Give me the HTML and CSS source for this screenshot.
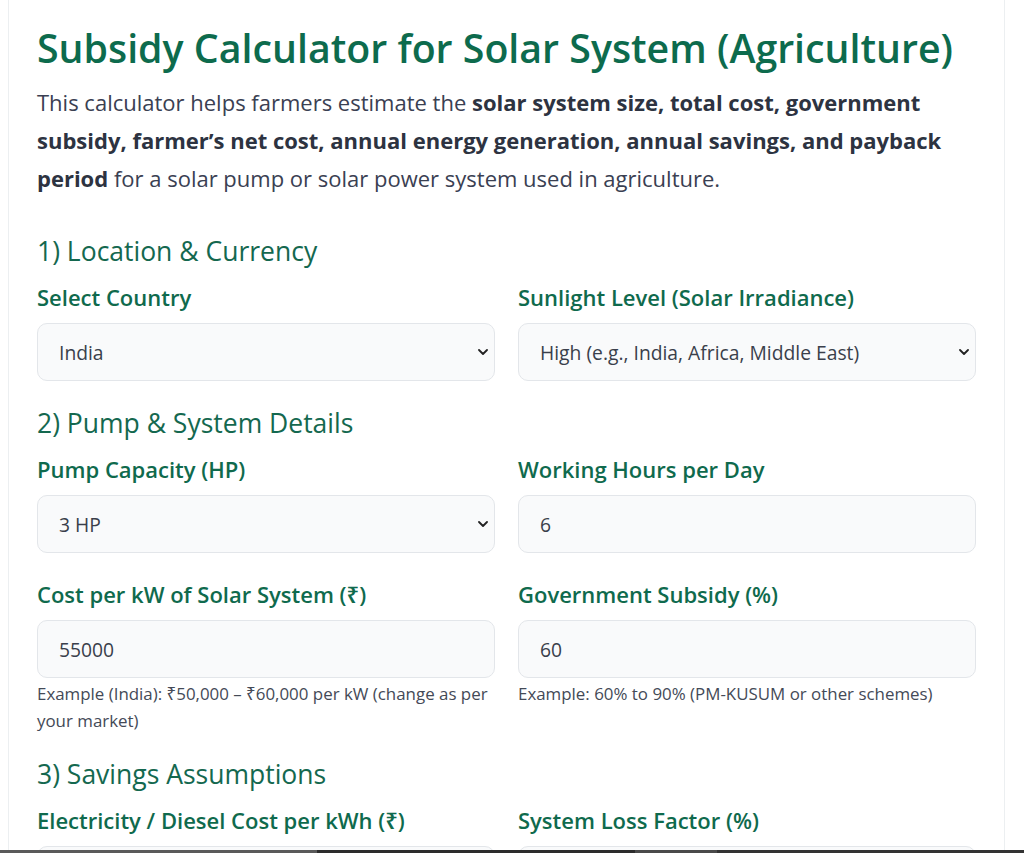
FILE: index.html
```html
<!DOCTYPE html>
<html lang="en">
<head>
<meta charset="utf-8">
<title>Subsidy Calculator for Solar System (Agriculture)</title>
<link rel="stylesheet" href="styles.css">
</head>
<body>
<main class="card">
  <h1 class="title">Subsidy Calculator for Solar System (Agriculture)</h1>
  <p class="intro">This calculator helps farmers estimate the <strong>solar system size, total cost, government subsidy, farmer’s net cost, annual energy generation, annual savings, and payback period</strong> for a solar pump or solar power system used in agriculture.</p>

  <h2 class="section">1) Location &amp; Currency</h2>
  <div class="grid">
    <div class="field">
      <label class="label" for="country">Select Country</label>
      <div class="select-wrap">
        <select id="country" class="control"><option>India</option></select>
        <svg class="chev" width="10" height="6" viewBox="0 0 10 6"><path d="M1 1 L5 5 L9 1" fill="none" stroke="#222" stroke-width="1.8" stroke-linecap="round" stroke-linejoin="round"/></svg>
      </div>
    </div>
    <div class="field">
      <label class="label" for="sun">Sunlight Level (Solar Irradiance)</label>
      <div class="select-wrap">
        <select id="sun" class="control"><option>High (e.g., India, Africa, Middle East)</option></select>
        <svg class="chev" width="10" height="6" viewBox="0 0 10 6"><path d="M1 1 L5 5 L9 1" fill="none" stroke="#222" stroke-width="1.8" stroke-linecap="round" stroke-linejoin="round"/></svg>
      </div>
    </div>
  </div>

  <h2 class="section">2) Pump &amp; System Details</h2>
  <div class="grid">
    <div class="field">
      <label class="label" for="hp">Pump Capacity (HP)</label>
      <div class="select-wrap">
        <select id="hp" class="control"><option>3 HP</option></select>
        <svg class="chev" width="10" height="6" viewBox="0 0 10 6"><path d="M1 1 L5 5 L9 1" fill="none" stroke="#222" stroke-width="1.8" stroke-linecap="round" stroke-linejoin="round"/></svg>
      </div>
    </div>
    <div class="field">
      <label class="label" for="hours">Working Hours per Day</label>
      <input id="hours" class="control" type="text" value="6">
    </div>
    <div class="field">
      <label class="label" for="cost">Cost per kW of Solar System (₹)</label>
      <input id="cost" class="control" type="text" value="55000">
      <p class="hint">Example (India): ₹50,000 – ₹60,000 per kW (change as per your market)</p>
    </div>
    <div class="field">
      <label class="label" for="subsidy">Government Subsidy (%)</label>
      <input id="subsidy" class="control" type="text" value="60">
      <p class="hint">Example: 60% to 90% (PM-KUSUM or other schemes)</p>
    </div>
  </div>

  <h2 class="section">3) Savings Assumptions</h2>
  <div class="grid">
    <div class="field">
      <label class="label" for="elec">Electricity / Diesel Cost per kWh (₹)</label>
      <input id="elec" class="control" type="text" value="8">
    </div>
    <div class="field">
      <label class="label" for="loss">System Loss Factor (%)</label>
      <input id="loss" class="control" type="text" value="15">
    </div>
  </div>
</main>
<div class="taskbar"></div>
</body>
</html>
```

FILE: styles.css
```css
* { box-sizing: border-box; }

html, body { background: #ffffff; }

body {
  margin: 0 8px;
  font-family: "Open Sans", "Noto Sans", sans-serif;
  color: #3b4252;
}

.card {
  width: 997px;
  border: 1px solid #eceff1;
  border-top: 0;
  background: #fff;
  padding: 25px 28px 40px;
}

.title {
  margin: 0;
  font-size: 39.3px;
  line-height: 46px;
  font-weight: 600;
  color: #0d6b4d;
}

.intro {
  margin: 12px 0 0;
  font-size: 22px;
  line-height: 38px;
  color: #3a4052;
}
.intro strong { color: #2d3341; font-weight: 700; }

.section {
  margin: 36px 0 13px;
  font-size: 26.5px;
  line-height: 36px;
  font-weight: 400;
  color: #14684f;
}
.grid + .section { margin-top: 24px; }

.grid {
  display: grid;
  grid-template-columns: 1fr 1fr;
  column-gap: 23px;
  row-gap: 26px;
}

.field { display: flex; flex-direction: column; min-width: 0; }

.label {
  font-size: 22px;
  line-height: 30px;
  font-weight: 600;
  color: #0f6a4d;
  margin-bottom: 11px;
}

.select-wrap { position: relative; }

.control {
  display: block;
  width: 100%;
  height: 58px;
  padding: 0 21px;
  border: 1px solid #e3e6ea;
  border-radius: 10px;
  background: #f9fafb;
  font-family: inherit;
  font-size: 19.3px;
  color: #3a3f4b;
  outline: none;
  -webkit-appearance: none;
  appearance: none;
}

.chev {
  position: absolute;
  right: 7px;
  top: 26px;
  pointer-events: none;
}

.hint {
  margin: 2px 0 -2px;
  font-size: 16.9px;
  line-height: 27px;
  color: #444a57;
}

.taskbar {
  position: fixed;
  left: 0;
  right: 0;
  bottom: 0;
  height: 3px;
  background: linear-gradient(to right, #5a5a5a 0 31%, #2c2c2c 31% 62%, #4a4a4a 62% 70%, #333 70% 100%);
}
```
